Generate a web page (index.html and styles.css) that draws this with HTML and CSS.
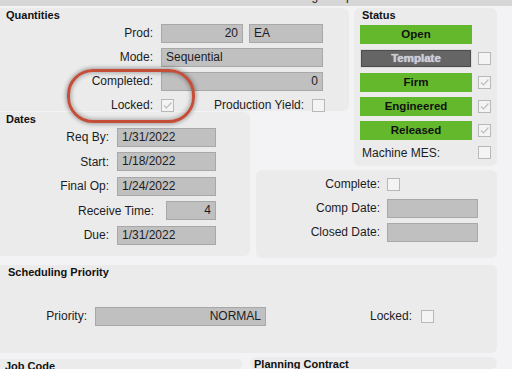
FILE: index.html
```html
<!DOCTYPE html>
<html lang="en">
<head>
  <meta charset="UTF-8">
  <title>Job Entry</title>
  <link rel="stylesheet" href="styles.css">
</head>
<body>
  <div class="topbar"><span>Job Scheduling Setup</span></div>
  <div class="page">
    <div class="top-grid">
      <section class="panel edge quantities">
        <div class="title">Quantities</div>
        <div class="row">
          <span class="lbl">Prod:</span>
          <span class="field num w-prod">20</span>
          <span class="field w-uom">EA</span>
        </div>
        <div class="row">
          <span class="lbl">Mode:</span>
          <span class="field w-wide">Sequential</span>
        </div>
        <div class="row">
          <span class="lbl">Completed:</span>
          <span class="field num w-wide">0</span>
        </div>
        <div class="row">
          <span class="lbl">Locked:</span>
          <span class="cb"><svg viewBox="0 0 11 11"><polyline points="2,5.5 4.5,8 9.5,2.5"/></svg></span>
          <span class="lbl yield">Production Yield:</span>
          <span class="cb"></span>
        </div>
        <div class="mark"></div>
      </section>

      <section class="panel status">
        <div class="title">Status</div>
        <div class="status-row"><span class="btn green">Open</span></div>
        <div class="status-row"><span class="btn template">Template</span><span class="cb"></span></div>
        <div class="status-row"><span class="btn green">Firm</span><span class="cb"><svg viewBox="0 0 11 11"><polyline points="2,5.5 4.5,8 9.5,2.5"/></svg></span></div>
        <div class="status-row"><span class="btn green">Engineered</span><span class="cb"><svg viewBox="0 0 11 11"><polyline points="2,5.5 4.5,8 9.5,2.5"/></svg></span></div>
        <div class="status-row"><span class="btn green">Released</span><span class="cb"><svg viewBox="0 0 11 11"><polyline points="2,5.5 4.5,8 9.5,2.5"/></svg></span></div>
        <div class="status-row mes"><span class="mes-lbl">Machine MES:</span><span class="cb"></span></div>
      </section>

      <section class="panel edge dates">
        <div class="title">Dates</div>
        <div class="row"><span class="lbl">Req By:</span><span class="field w-date">1/31/2022</span></div>
        <div class="row"><span class="lbl">Start:</span><span class="field w-date">1/18/2022</span></div>
        <div class="row"><span class="lbl">Final Op:</span><span class="field w-date">1/24/2022</span></div>
        <div class="row"><span class="lbl recv">Receive Time:</span><span class="field num w-recv">4</span></div>
        <div class="row"><span class="lbl">Due:</span><span class="field w-date">1/31/2022</span></div>
      </section>

      <section class="panel complete">
        <div class="row"><span class="lbl">Complete:</span><span class="cb"></span></div>
        <div class="row"><span class="lbl">Comp Date:</span><span class="field w-comp"></span></div>
        <div class="row"><span class="lbl">Closed Date:</span><span class="field w-comp"></span></div>
      </section>
    </div>

    <section class="panel edge sched">
      <div class="title">Scheduling Priority</div>
      <div class="row">
        <span class="lbl">Priority:</span>
        <span class="field num w-prio">NORMAL</span>
        <span class="lbl lock-lbl">Locked:</span>
        <span class="cb"></span>
      </div>
    </section>

    <div class="bottom">
      <section class="panel edge jobcode"><div class="title">Job Code</div></section>
      <section class="panel contract"><div class="title">Planning Contract</div></section>
    </div>
  </div>
</body>
</html>
```

FILE: styles.css
```css
body { margin: 0; height: 369px; overflow: hidden; background: #f3f3f5; font-family: "Liberation Sans", Arial, sans-serif; font-size: 12px; color: #1c1c24; }
.topbar { height: 6px; background: #d6d6d6; overflow: hidden; }
.topbar span { display: block; margin-top: -11px; padding-left: 236px; line-height: 14px; }
.page { width: 497px; padding-top: 2px; }

.top-grid { display: grid; grid-template-columns: 250px 6px 93px 5px 143px; grid-template-rows: 103px 1px 54px 4px 86px 2px; }
.panel { background: #ebebeb; border-radius: 6px; }
.panel.edge { border-radius: 0 6px 6px 0; }
.quantities { grid-column: 1 / 4; grid-row: 1; position: relative; }
.status { grid-column: 5; grid-row: 1 / 4; padding: 0 6px; }
.dates { grid-column: 1; grid-row: 3 / 6; }
.complete { grid-column: 3 / 6; grid-row: 5 / 7; padding-top: 2px; }

.title { height: 11px; padding: 2px 0 0 6px; font-size: 11px; line-height: 11px; font-weight: bold; color: #111; white-space: nowrap; }
.status .title { padding-left: 2px; height: 12px; }

.row { display: flex; align-items: center; height: 24px; }
.lbl { flex: none; width: 153px; margin-right: 8px; text-align: right; white-space: nowrap; }
.field { flex: none; box-sizing: border-box; height: 19px; padding: 0 4px; border: 1px solid #a8a8a8; background: #c0c0c0; line-height: 17px; white-space: nowrap; }
.num { text-align: right; }
.w-prod { width: 82px; }
.w-uom { width: 74px; margin-left: 6px; }
.w-wide { width: 162px; }
.lbl.yield { width: auto; margin: 0 8px 0 40px; }

.cb { flex: none; box-sizing: border-box; width: 13px; height: 13px; border: 1px solid #b8b8b8; background: #f4f4f4; }
.cb svg { display: block; width: 11px; height: 11px; fill: none; stroke: #bdbdbd; stroke-width: 1.2; }

.mark { position: absolute; left: 67px; top: 61px; box-sizing: border-box; width: 128px; height: 54px; border: 3px solid #c44e37; border-radius: 26px; box-shadow: 0 0 4px 1px rgba(0,0,0,0.35), inset 0 0 4px 1px rgba(0,0,0,0.3); }

.status-row { display: flex; align-items: center; gap: 6px; height: 24px; }
.status-row.mes { height: 21px; }
.btn { box-sizing: border-box; width: 112px; height: 19px; font-size: 11.5px; font-weight: bold; line-height: 19px; text-align: center; color: #111; }
.green { background: #63b92b; }
.template { background: #656565; border: 1px solid #dcdcdc; box-shadow: inset 0 0 0 1px #4c4c4c; line-height: 17px; color: #c9cdd6; text-shadow: 0 0 1px #eef; }
.mes-lbl { width: 112px; padding-left: 2px; box-sizing: border-box; }

.dates .row { height: 24.5px; }
.dates .lbl { width: 109px; }
.dates .lbl.recv { width: 154px; margin-right: 12px; }
.w-date { width: 99px; }
.w-recv { width: 50px; }

.complete .lbl { width: 124px; margin-right: 7px; }
.w-comp { width: 91px; }

.sched { margin-top: 7px; height: 88px; }
.sched .title { padding-left: 8px; }
.sched .row { margin-top: 26px; }
.sched .lbl { width: 87px; }
.w-prio { width: 171px; }
.sched .lbl.lock-lbl { width: auto; margin: 0 9px 0 104px; }

.bottom { display: flex; gap: 8px; margin-top: 4px; }
.jobcode { width: 242px; height: 10px; margin-top: 2px; overflow: hidden; }
.jobcode .title { padding-left: 5px; }
.contract { width: 247px; height: 12px; overflow: hidden; }
.contract .title { padding-left: 4px; }
```
